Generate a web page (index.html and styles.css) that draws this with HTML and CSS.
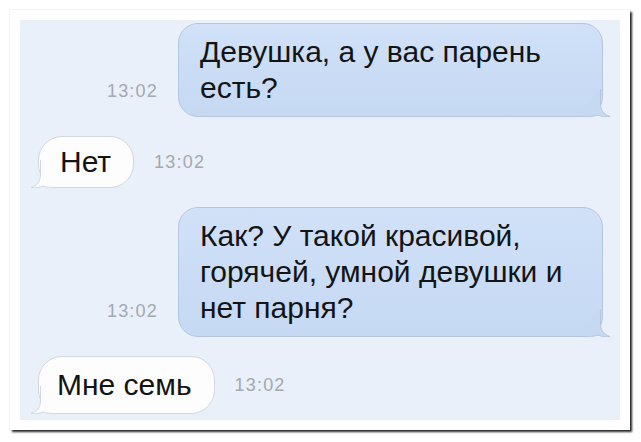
FILE: index.html
```html
<!DOCTYPE html>
<html lang="ru">
<head>
<meta charset="utf-8">
<title>Чат</title>
<link rel="stylesheet" href="styles.css">
</head>
<body>
<div class="frame">
  <div class="panel">
    <div class="row row-out">
      <span class="time">13:02</span>
      <div class="bubble out">
        <span class="txt">Девушка, а у вас парень<br>есть?</span>
        <svg class="tail" width="36" height="28" viewBox="0 0 36 28"><path class="tail-fill" d="M24.5 0 V14 C24.5 21 27 25 34 27.5 C29 28 25.5 27.5 22 26 C19 27.2 15 27.5 10 27.5 H0 Z"/><path class="tail-line" d="M24.5 0 V14 C24.5 21 27 25 34 27.5 C29 28 25.5 27.5 22 26 C19 27.2 15 27.5 10 27.5 H0"/></svg>
      </div>
    </div>
    <div class="row row-in">
      <div class="bubble in">
        <span class="txt">Нет</span>
        <svg class="tail" width="36" height="28" viewBox="0 0 36 28"><path class="tail-fill" d="M24.5 0 V14 C24.5 21 27 25 34 27.5 C29 28 25.5 27.5 22 26 C19 27.2 15 27.5 10 27.5 H0 Z"/><path class="tail-line" d="M24.5 0 V14 C24.5 21 27 25 34 27.5 C29 28 25.5 27.5 22 26 C19 27.2 15 27.5 10 27.5 H0"/></svg>
      </div>
      <span class="time">13:02</span>
    </div>
    <div class="row row-out">
      <span class="time">13:02</span>
      <div class="bubble out">
        <span class="txt">Как? У такой красивой,<br>горячей, умной девушки и<br>нет парня?</span>
        <svg class="tail" width="36" height="28" viewBox="0 0 36 28"><path class="tail-fill" d="M24.5 0 V14 C24.5 21 27 25 34 27.5 C29 28 25.5 27.5 22 26 C19 27.2 15 27.5 10 27.5 H0 Z"/><path class="tail-line" d="M24.5 0 V14 C24.5 21 27 25 34 27.5 C29 28 25.5 27.5 22 26 C19 27.2 15 27.5 10 27.5 H0"/></svg>
      </div>
    </div>
    <div class="row row-in">
      <div class="bubble in tall">
        <span class="txt">Мне семь</span>
        <svg class="tail" width="36" height="28" viewBox="0 0 36 28"><path class="tail-fill" d="M24.5 0 V14 C24.5 21 27 25 34 27.5 C29 28 25.5 27.5 22 26 C19 27.2 15 27.5 10 27.5 H0 Z"/><path class="tail-line" d="M24.5 0 V14 C24.5 21 27 25 34 27.5 C29 28 25.5 27.5 22 26 C19 27.2 15 27.5 10 27.5 H0"/></svg>
      </div>
      <span class="time">13:02</span>
    </div>
  </div>
</div>
</body>
</html>
```

FILE: styles.css
```css
* { box-sizing: border-box; }

html, body {
  margin: 0;
  padding: 0;
  background: #ffffff;
}

body {
  width: 641px;
  height: 442px;
  overflow: hidden;
  font-family: "Liberation Sans", Arial, sans-serif;
}

.frame {
  margin: 10px 0 0 10px;
  width: 620px;
  height: 420px;
  padding: 10px;
  background: #ffffff;
  box-shadow: 2px 2px 2px rgba(0, 0, 0, 0.85), 0 0 1px rgba(0, 0, 0, 0.25);
}

.panel {
  width: 600px;
  height: 400px;
  background: #eaf0f9;
  display: flex;
  flex-direction: column;
  gap: 19px;
  padding: 3px 17px 0 18px;
}

.row {
  display: flex;
  gap: 20px;
}

.row-out {
  justify-content: flex-end;
  align-items: flex-end;
}

.row-in {
  justify-content: flex-start;
  align-items: center;
}

.time {
  font-size: 18px;
  line-height: 20px;
  letter-spacing: 1.2px;
  color: #a2a9b2;
}

.row-out .time {
  margin-bottom: 16px;
}

.bubble {
  position: relative;
  font-size: 30px;
  line-height: 36px;
  color: #141414;
}

.txt {
  position: relative;
  z-index: 1;
}

.out {
  width: 425px;
  padding: 10px 20px 10px 21px;
  background: linear-gradient(#d0e1f8, #c6d9f3);
  border: 1px solid #b5c7de;
  border-radius: 20px;
}

.in {
  padding: 7px 22px 7px 21px;
  background: #fdfdfd;
  border: 1px solid #d3d8df;
  border-radius: 24px;
}

.in.tall {
  padding: 10px 22px 10px 18px;
}

.tail {
  position: absolute;
  bottom: -1px;
  right: -10px;
  z-index: 0;
}

.in .tail {
  right: auto;
  left: -10px;
  transform: scaleX(-1);
}

.tail-line {
  fill: none;
  stroke-width: 1;
}

.out .tail-fill { fill: #c6d9f3; }
.out .tail-line { stroke: #b5c7de; }
.in .tail-fill { fill: #fdfdfd; }
.in .tail-line { stroke: #d3d8df; }
```
